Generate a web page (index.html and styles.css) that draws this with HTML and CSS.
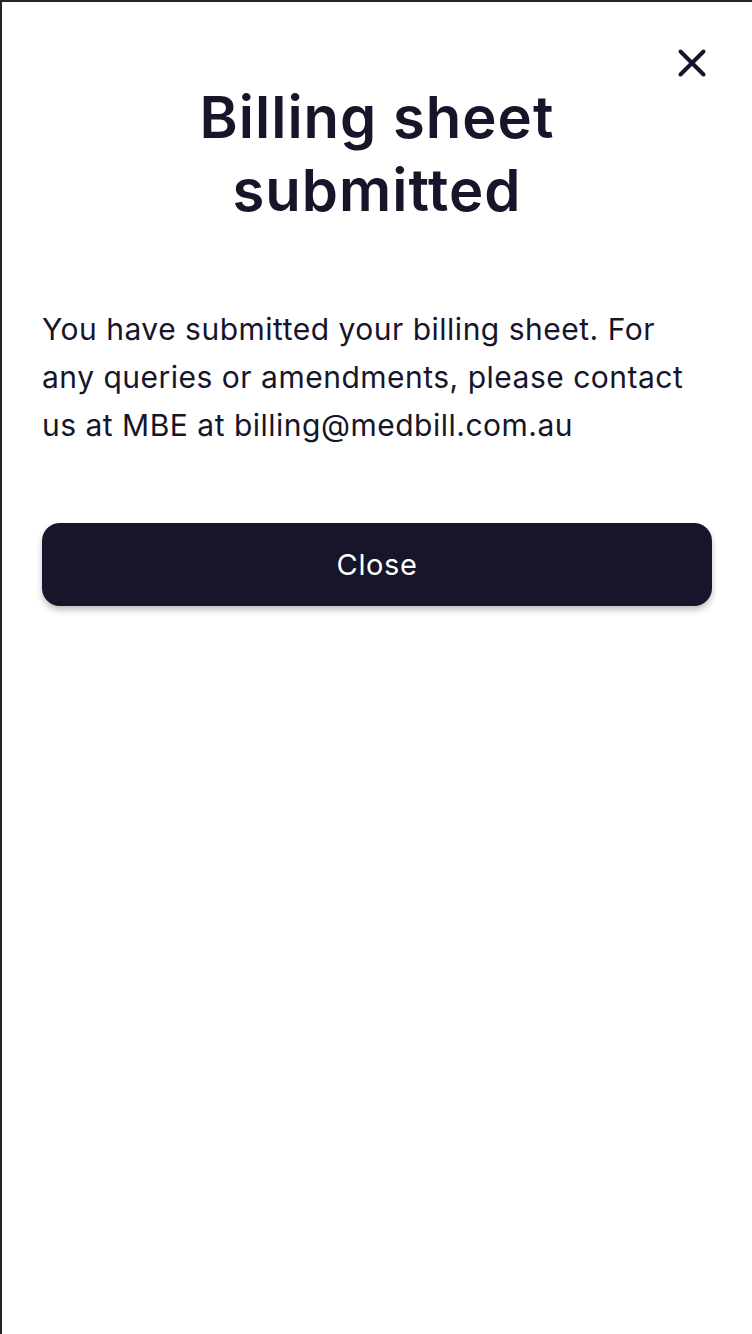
FILE: index.html
```html
<!DOCTYPE html>
<html lang="en">
<head>
<meta charset="utf-8">
<title>Billing sheet submitted</title>
<link rel="stylesheet" href="styles.css">
</head>
<body>
<div class="screen">
  <button class="close-x" aria-label="Close">
    <svg width="30" height="30" viewBox="0 0 30 30" fill="none">
      <path d="M3.5 3.5 L26.5 26.5 M26.5 3.5 L3.5 26.5" stroke="#16152a" stroke-width="4" stroke-linecap="round"/>
    </svg>
  </button>
  <h1 class="title">Billing sheet<br>submitted</h1>
  <p class="message">You have submitted your billing sheet. For any queries or amendments, please contact us at MBE at billing@medbill.com.au</p>
  <button class="primary-btn">Close</button>
</div>
</body>
</html>
```

FILE: styles.css
```css
html, body {
  margin: 0;
  padding: 0;
  background: #ffffff;
}

.screen {
  position: relative;
  box-sizing: border-box;
  min-height: 1334px;
  border-top: 2px solid #2a2421;
  border-left: 2px solid #2a2421;
  padding: 79px 40px 40px 40px;
  display: flex;
  flex-direction: column;
  font-family: Inter, "Noto Sans", sans-serif;
  color: #16152a;
}

.close-x {
  position: absolute;
  top: 46px;
  right: 45px;
  width: 30px;
  height: 30px;
  padding: 0;
  border: none;
  background: none;
  cursor: pointer;
  display: flex;
}

.title {
  margin: 0;
  text-align: center;
  font-size: 58px;
  line-height: 73px;
  font-weight: 600;
  letter-spacing: 1px;
}

.message {
  margin: 78px 0 0 0;
  font-size: 30px;
  line-height: 48px;
  font-weight: 400;
  letter-spacing: 0.5px;
}

.primary-btn {
  margin-top: 74px;
  height: 83px;
  width: 100%;
  border: none;
  border-radius: 18px;
  background: #16152a;
  color: #ffffff;
  font-family: Inter, "Noto Sans", sans-serif;
  font-size: 29px;
  font-weight: 400;
  letter-spacing: 0.6px;
  box-shadow: 0 4px 6px rgba(0, 0, 0, 0.25);
  cursor: pointer;
}
```
